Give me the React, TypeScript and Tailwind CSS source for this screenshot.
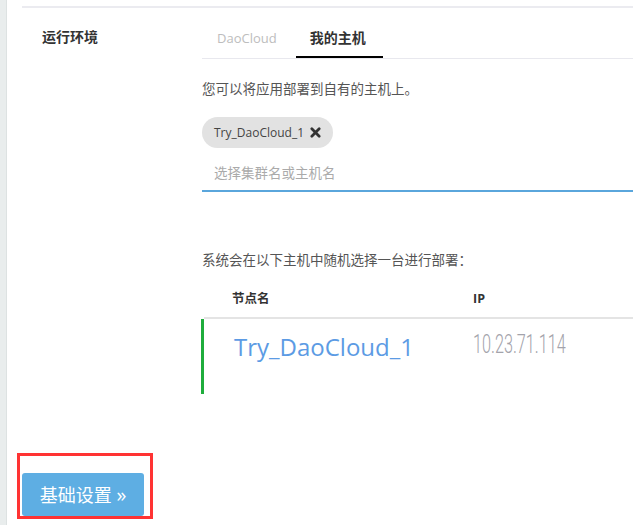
export default function App() {
  const font = { fontFamily: '"Open Sans", "Noto Sans CJK SC", sans-serif' }
  return (
    <div className="flex h-[525px] w-[633px] overflow-hidden bg-white text-[#333]" style={font}>
      {/* 左侧边栏 */}
      <div className="w-[7px] shrink-0 border-r border-[#dde2e2] bg-[#e9eded]" />

      <div className="flex min-w-0 flex-1 flex-col pl-[15px]">
        <div className="mt-[6px] border-t-2 border-[#ebebf0]" />

        {/* 运行环境 */}
        <div className="flex">
          <div className="w-[180px] shrink-0 pl-[20px] pt-[20px] text-[14px] font-bold leading-[18px]">运行环境</div>

          <div className="w-[460px] shrink-0">
            <div className="mt-[10px] flex border-b border-[#e8e8ee]">
              <div className="px-[15px] pb-[11px] pt-[11px] text-[13px] leading-[18px] text-[#bdbdbd]">DaoCloud</div>
              <div className="ml-[4px] border-b-2 border-black pb-[9px] pl-[14px] pr-[17px] pt-[11px] text-[14px] font-bold leading-[18px]">
                我的主机
              </div>
            </div>

            <p className="mt-[21px] text-[13.5px] leading-[18px] text-[#555]">您可以将应用部署到自有的主机上。</p>

            <div className="mt-[19px] flex">
              <span className="flex h-[31px] items-center gap-[6px] rounded-full bg-[#e2e2e2] pl-[12px] pr-[12px] text-[12px] text-[#444]">
                Try_DaoCloud_1
                <svg width="11" height="11" viewBox="0 0 12 12">
                  <path d="M2 2 L10 10 M10 2 L2 10" stroke="#333" strokeWidth="3" strokeLinecap="round" />
                </svg>
              </span>
            </div>

            <div className="mt-[16px] border-b-2 border-[#5aa6dc] pb-[8px] pl-[12px] text-[13.5px] leading-[18px] text-[#aaa]">
              选择集群名或主机名
            </div>

            <p className="mt-[59px] text-[13.5px] leading-[18px] text-[#555]">系统会在以下主机中随机选择一台进行部署：</p>

            {/* 节点表 */}
            <div className="mt-[21px] ml-[2px]">
              <div className="flex border-b-2 border-[#e4e4e4] pb-[9px] text-[12.5px] font-bold leading-[18px]">
                <div className="w-[269px] pl-[28px]">节点名</div>
                <div>IP</div>
              </div>
              <div className="-ml-[3px] flex h-[75px] border-l-[3px] border-[#1fad3c]">
                <div className="w-[269px] pl-[30px] pt-[12px] text-[24px] leading-[32px] text-[#5c9be4]">Try_DaoCloud_1</div>
                <div className="pt-[11px]">
                  <span
                    className="inline-block origin-left scale-x-[0.65] text-[25px] font-light leading-[30px] text-[#a3a3ab]"
                    style={{ fontFamily: 'Roboto, sans-serif' }}
                  >
                    10.23.71.114
                  </span>
                </div>
              </div>
            </div>
          </div>
        </div>

        {/* 底部按钮 */}
        <div className="mt-auto mb-[6px] -ml-[5px] flex h-[66px] w-[136px] items-end border-[3px] border-[#ff3333] pl-[2px]">
          <button className="h-[43px] w-[122px] rounded-[3px] bg-[#5eaee3] text-[18px] text-white">
            基础设置 <span className="text-[20px]">»</span>
          </button>
        </div>
      </div>
    </div>
  )
}
